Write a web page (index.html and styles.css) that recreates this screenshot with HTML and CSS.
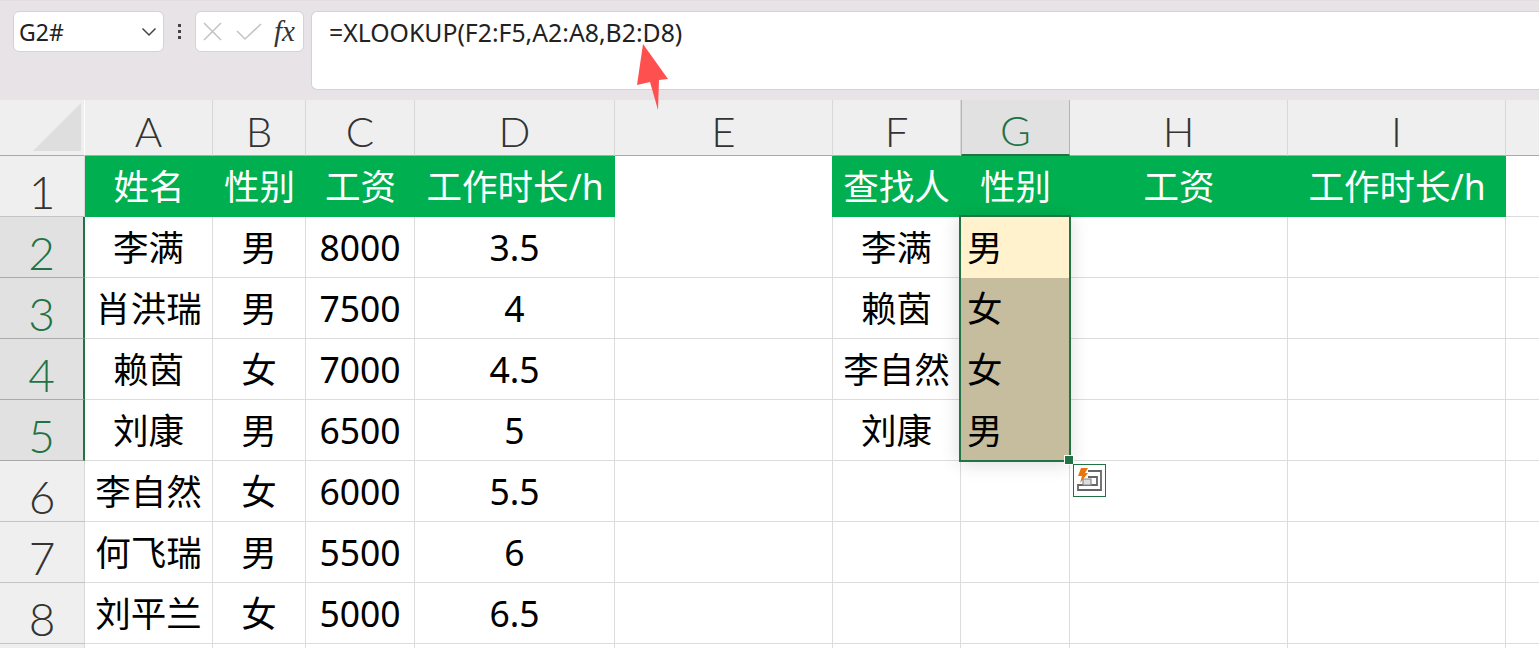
FILE: index.html
```html
<!DOCTYPE html>
<html lang="zh">
<head>
<meta charset="utf-8">
<title>XLOOKUP</title>
<link rel="stylesheet" href="styles.css">
</head>
<body>
<div class="app">
  <header class="fbar">
    <div class="namebox"><span>G2#</span>
      <svg class="chev" width="16" height="10" viewBox="0 0 16 10"><path d="M1.500 1.500 8 8l6.500-6.500" fill="none" stroke="#444" stroke-width="1.500"/></svg>
    </div>
    <div class="dots"><i></i><i></i><i></i></div>
    <div class="fxbox">
      <svg width="20" height="20" viewBox="0 0 20 20"><path d="M1 1l17 17M18 1 1 18" fill="none" stroke="#c4c4c4" stroke-width="1.600"/></svg>
      <svg width="26" height="18" viewBox="0 0 26 18"><path d="M1 8l8 8L25 1" fill="none" stroke="#c4c4c4" stroke-width="1.600"/></svg>
      <span class="fx">fx</span>
    </div>
    <div class="formula">=XLOOKUP(F2:F5,A2:A8,B2:D8)</div>
  </header>
  <main class="sheet">
    <div class="hd corner"><svg width="48" height="48" viewBox="0 0 48 48"><path d="M48 0V48H0Z" fill="#dedede"/></svg></div>
    <div class="hd col">A</div><div class="hd col">B</div><div class="hd col">C</div><div class="hd col">D</div><div class="hd col">E</div><div class="hd col">F</div><div class="hd col active-col">G</div><div class="hd col">H</div><div class="hd col">I</div><div class="hd col end"></div>

    <div class="hd row">1</div>
    <div class="c th">姓名</div><div class="c th">性别</div><div class="c th">工资</div><div class="c th">工作时长/h</div><div class="c gap"></div><div class="c th">查找人</div><div class="c th">性别</div><div class="c th">工资</div><div class="c th">工作时长/h</div><div class="c end"></div>

    <div class="hd row active-row">2</div>
    <div class="c">李满</div><div class="c">男</div><div class="c">8000</div><div class="c">3.5</div><div class="c"></div><div class="c">李满</div><div class="c sel first">男</div><div class="c"></div><div class="c"></div><div class="c end"></div>

    <div class="hd row active-row">3</div>
    <div class="c">肖洪瑞</div><div class="c">男</div><div class="c">7500</div><div class="c">4</div><div class="c"></div><div class="c">赖茵</div><div class="c sel">女</div><div class="c"></div><div class="c"></div><div class="c end"></div>

    <div class="hd row active-row">4</div>
    <div class="c">赖茵</div><div class="c">女</div><div class="c">7000</div><div class="c">4.5</div><div class="c"></div><div class="c">李自然</div><div class="c sel">女</div><div class="c"></div><div class="c"></div><div class="c end"></div>

    <div class="hd row active-row">5</div>
    <div class="c">刘康</div><div class="c">男</div><div class="c">6500</div><div class="c">5</div><div class="c"></div><div class="c">刘康</div><div class="c sel">男</div><div class="c"></div><div class="c"></div><div class="c end"></div>

    <div class="hd row">6</div>
    <div class="c">李自然</div><div class="c">女</div><div class="c">6000</div><div class="c">5.5</div><div class="c"></div><div class="c"></div><div class="c"></div><div class="c"></div><div class="c"></div><div class="c end"></div>

    <div class="hd row">7</div>
    <div class="c">何飞瑞</div><div class="c">男</div><div class="c">5500</div><div class="c">6</div><div class="c"></div><div class="c"></div><div class="c"></div><div class="c"></div><div class="c"></div><div class="c end"></div>

    <div class="hd row">8</div>
    <div class="c">刘平兰</div><div class="c">女</div><div class="c">5000</div><div class="c">6.5</div><div class="c"></div><div class="c"></div><div class="c"></div><div class="c"></div><div class="c"></div><div class="c end"></div>

    <div class="hd row"></div>
    <div class="c"></div><div class="c"></div><div class="c"></div><div class="c"></div><div class="c"></div><div class="c"></div><div class="c"></div><div class="c"></div><div class="c"></div><div class="c end"></div>

    <div class="selection"><span class="handle"></span></div>
    <div class="quick">
      <svg width="31" height="31" viewBox="0 0 31 31">
        <path d="M14 6H27V25H4V20H23V12H14" fill="none" stroke="#666" stroke-width="1.800"/>
        <path d="M9 14H17V20H9Z" fill="#ddd" stroke="#888" stroke-width="1.200"/>
        <path d="M7 3h7l-3 5h3L6 18l2-7H4z" fill="#e8760c"/>
      </svg>
    </div>
  </main>
  <svg class="arrow" width="32" height="70" viewBox="0 0 32 70"><path d="M6 3 31 38 22 39 21 69 13 41 0 44Z" fill="#ff5050"/></svg>
</div>
</body>
</html>
```

FILE: styles.css
```css
* { box-sizing: border-box; }
html, body { margin: 0; padding: 0; height: 100%; overflow: hidden; background: #fff; }
.app {
  position: relative;
  width: 1539px;
  height: 648px;
  overflow: hidden;
  font-family: "Noto Sans", "Noto Sans CJK SC", sans-serif;
  color: #000;
}
.fbar {
  height: 100px;
  background: #e8e3e6;
  display: flex;
  align-items: flex-start;
  padding-top: 11px;
  padding-left: 13px;
  border-top: 1px solid #e2dce0;
}
.namebox {
  width: 151px;
  height: 41px;
  margin-top: -1px;
  background: #fff;
  border: 1px solid #d6d2d4;
  border-radius: 6px;
  display: flex;
  align-items: center;
  justify-content: space-between;
  padding: 0 6px 0 5px;
  font-size: 23px;
  color: #222;
}
.chev { display: block; }
.dots {
  width: 31px;
  height: 41px;
  margin-top: -1px;
  display: flex;
  flex-direction: column;
  align-items: center;
  justify-content: center;
  gap: 3px;
}
.dots i { width: 3px; height: 3px; background: #444; display: block; }
.fxbox {
  width: 109px;
  height: 41px;
  margin-top: -1px;
  background: #fff;
  border: 1px solid #d6d2d4;
  border-radius: 6px;
  display: flex;
  align-items: center;
  padding-left: 7px;
  gap: 13px;
}
.fx {
  font-family: "Liberation Serif", serif;
  font-style: italic;
  font-size: 29px;
  line-height: 1;
  color: #333;
  margin-left: -1px;
}
.formula {
  flex: 1;
  height: 79px;
  margin-left: 7px;
  margin-top: -1px;
  background: #fff;
  border: 1px solid #d6d2d4;
  border-right: 0;
  border-radius: 6px 0 0 6px;
  padding: 6px 0 0 17px;
  font-size: 24.800px;
  line-height: 29px;
  color: #222;
}
.sheet {
  position: relative;
  display: grid;
  grid-template-columns: 85px 128px 93px 109px 200px 218px 128px 109px 218px 218px 33px;
  grid-template-rows: 56px repeat(8, 61px) 61px;
}
.hd {
  background: #efefef;
  border-right: 1px solid #d8d8d8;
  border-bottom: 1px solid #d8d8d8;
  font-family: "Lato", "Noto Sans", sans-serif;
  font-weight: 300;
  color: #333;
  font-size: 42px;
  line-height: 1;
}
.corner {
  display: flex;
  align-items: flex-end;
  justify-content: flex-end;
  padding: 0 3px 4px 0;
  border-right-color: #fff;
  border-bottom-color: #aaa;
}
.col {
  display: flex;
  align-items: center;
  justify-content: center;
  border-bottom: 1px solid #aaa;
  padding-top: 6px;
}
.col.end { border-right: 0; }
.active-col {
  background: #e1e1e1;
  color: #217346;
  border-left: 1px solid #b5b5b5;
  border-right: 1px solid #b5b5b5;
  border-bottom: 2px solid #217346;
}
.row {
  display: flex;
  align-items: center;
  justify-content: center;
  padding-top: 11px;
  border-bottom: 1px solid #c4c4c4;
  font-size: 46px;
}
.active-row {
  background: #e1e1e1;
  color: #217346;
  border-bottom: 1px solid #aaa;
  border-right: 2px solid #217346;
}
.c {
  border-right: 1px solid #dcdcdc;
  border-bottom: 1px solid #dcdcdc;
  display: flex;
  align-items: center;
  justify-content: center;
  font-size: 35.500px;
  line-height: 1;
  white-space: nowrap;
  overflow: hidden;
  background: #fff;
  padding-top: 1px;
}
.c.end { border-right: 0; }
.c.gap { border-right: 0; width: 217px; border-bottom: 0; }
.th {
  background: #00b050;
  color: #fff;
  border-right: 0;
  border-bottom: 0;
  padding-top: 0;
}
.gap + .th { margin-left: -1px; padding-right: 0; }
.sel {
  background: #c5bd9d;
  justify-content: flex-start;
  padding-left: 6px;
  border-right: 0;
  border-bottom: 0;
}
.sel.first { background: #fff2cc; }
.selection {
  position: absolute;
  left: 959px;
  top: 115px;
  width: 112px;
  height: 247px;
  border: 2px solid #217346;
  box-shadow: 0 2px 18px rgba(0, 0, 0, 0.14);
  pointer-events: none;
}
.handle {
  position: absolute;
  right: -5px;
  bottom: -5px;
  width: 8px;
  height: 8px;
  background: #217346;
  border: 1px solid #fff;
  box-sizing: content-box;
}
.quick {
  position: absolute;
  left: 1073px;
  top: 364px;
  width: 33px;
  height: 33px;
  background: #fff;
  border: 1px solid #217346;
  display: flex;
  align-items: center;
  justify-content: center;
}
.arrow {
  position: absolute;
  left: 637px;
  top: 41px;
}
```
